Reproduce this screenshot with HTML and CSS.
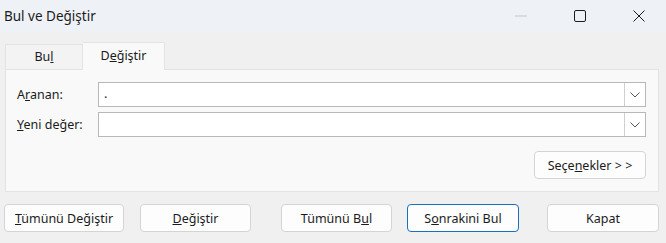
FILE: index.html
```html
<!DOCTYPE html>
<html lang="tr">
<head>
    <meta charset="UTF-8">
    <title>Bul ve Değiştir</title>
    <link rel="stylesheet" href="styles.css">
</head>
<body>
    <div class="titlebar">
        <div class="title">Bul ve Değiştir</div>
        <div class="controls">
            <span class="ctl"><svg width="12" height="12" viewBox="0 0 12 12"><line x1="0" y1="6" x2="12" y2="6" stroke="#c4c6c9" stroke-width="1"/></svg></span>
            <span class="ctl"><svg width="12" height="12" viewBox="0 0 12 12"><rect x="0.5" y="0.5" width="11" height="11" rx="1.5" fill="none" stroke="#1c1c1c" stroke-width="1"/></svg></span>
            <span class="ctl"><svg width="12" height="12" viewBox="0 0 12 12"><path d="M0.5 0.5 L11.5 11.5 M11.5 0.5 L0.5 11.5" stroke="#1c1c1c" stroke-width="1"/></svg></span>
        </div>
    </div>

    <div class="content">
        <div class="tabs">
            <div class="tab">Bu<u>l</u></div>
            <div class="tab active">D<u>e</u>ğiştir</div>
        </div>
        <div class="panel">
            <div class="row">
                <label class="label">A<u>r</u>anan:</label>
                <div class="combo">
                    <div class="combo-text">.</div>
                    <div class="combo-btn"><svg width="10" height="6" viewBox="0 0 10 6"><polyline points="0.5,0.5 5,5 9.5,0.5" fill="none" stroke="#555" stroke-width="1"/></svg></div>
                </div>
            </div>
            <div class="row">
                <label class="label"><u>Y</u>eni değer:</label>
                <div class="combo">
                    <div class="combo-text"></div>
                    <div class="combo-btn"><svg width="10" height="6" viewBox="0 0 10 6"><polyline points="0.5,0.5 5,5 9.5,0.5" fill="none" stroke="#555" stroke-width="1"/></svg></div>
                </div>
            </div>
            <div class="options">
                <button class="btn btn-options">Seçe<u>n</u>ekler &gt; &gt;</button>
            </div>
        </div>

        <div class="actions">
            <button class="btn b1"><u>T</u>ümünü Değiştir</button>
            <button class="btn b2"><u>D</u>eğiştir</button>
            <button class="btn b3">Tümünü B<u>u</u>l</button>
            <button class="btn b4 default">S<u>o</u>nrakini Bul</button>
            <button class="btn b5">Kapat</button>
        </div>
    </div>
</body>
</html>
```

FILE: styles.css
```css
body {
    margin: 0;
    background-color: #f0f0f0;
    font-family: "Noto Sans", "Open Sans", sans-serif;
    font-size: 12.5px;
    color: #1b1b1b;
}
.titlebar {
    display: flex;
    align-items: center;
    height: 32px;
    background-color: #eef2f6;
    padding-left: 4px;
}
.title {
    flex: 1;
    font-size: 13.5px;
}
.controls {
    display: flex;
    align-items: center;
    gap: 47px;
    padding-right: 21px;
}
.ctl {
    display: flex;
    width: 12px;
    height: 12px;
}
.content {
    padding: 10px 7px 0 5px;
}
.tabs {
    display: flex;
    align-items: flex-end;
    height: 27px;
}
.tab {
    width: 76px;
    height: 24px;
    line-height: 24px;
    text-align: center;
    background: #f3f3f3;
    border: 1px solid #e3e3e3;
    border-bottom: none;
}
.tab.active {
    width: 81px;
    height: 27px;
    line-height: 25px;
    background: #f9f9f9;
    border-left: none;
    position: relative;
    top: 1px;
}
.panel {
    background: #f9f9f9;
    border: 1px solid #e3e3e3;
    padding: 12px 12px 12px 11px;
}
.row {
    display: flex;
    align-items: center;
    margin-bottom: 5px;
}
.label {
    width: 81px;
}
.combo {
    flex: 1;
    display: flex;
    height: 23px;
    background: #fff;
    border: 1px solid #b8b8b8;
}
.combo-text {
    flex: 1;
    padding-left: 5px;
    line-height: 22px;
}
.combo-btn {
    width: 20px;
    display: flex;
    align-items: center;
    justify-content: center;
    border-left: 1px solid #cfcfcf;
}
.options {
    display: flex;
    justify-content: flex-end;
    margin-top: 14px;
}
.btn {
    font-family: inherit;
    font-size: 12.5px;
    color: #1b1b1b;
    height: 28px;
    background: #fdfdfd;
    border: 1px solid #d4d4d4;
    border-radius: 4px;
    padding: 0;
}
.btn-options {
    width: 112px;
}
.actions {
    display: flex;
    margin-top: 12px;
}
.b1 { width: 120px; margin-left: -1px; }
.b2 { width: 111px; margin-left: 16px; }
.b3 { width: 111px; margin-left: 30px; }
.b4 { width: 112px; margin-left: 15px; }
.b5 { width: 112px; margin-left: 28px; }
.default {
    border-color: #1a6fbf;
}
```
